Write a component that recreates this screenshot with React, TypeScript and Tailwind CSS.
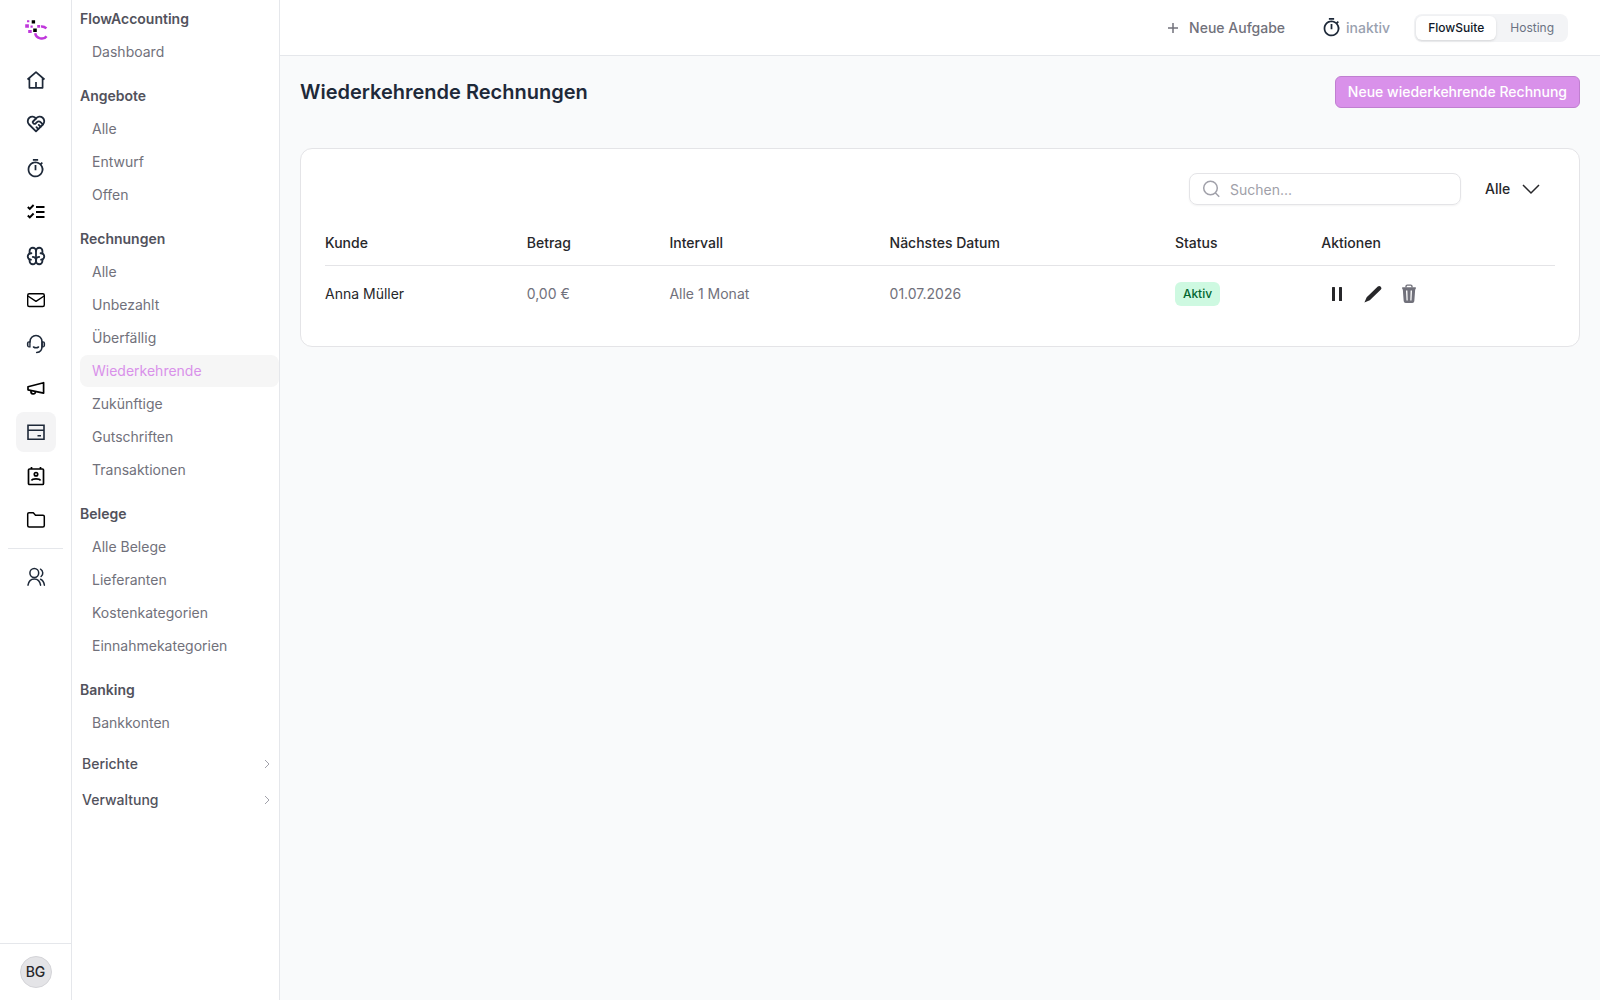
import { ReactNode } from 'react';
import { MdOutlineTimer } from 'react-icons/md';
import { TbBrain, TbHeartHandshake } from 'react-icons/tb';

const HomeIcon = () => (
  <svg viewBox="0 0 20 20" className="size-5" fill="none" stroke="currentColor" strokeWidth="1.7" strokeLinejoin="round">
    <path d="M3.4 8.4v9.400h13.200V8.400M1.500 9.500 10 2.200l8.500 7.300M10 17.500V12" />
  </svg>
);

const ChecksIcon = () => (
  <svg viewBox="0 0 20 20" className="size-5" fill="none" stroke="currentColor" strokeWidth="1.9">
    <path d="m1.800 5 2 2 3.800-4M1.800 13.500l2 2 3.800-4M10 5h8.500M10 10h8.500M10 15h8.500" />
  </svg>
);

const MailIcon = () => (
  <svg viewBox="0 0 20 20" className="size-5" fill="none" stroke="currentColor" strokeWidth="1.400" strokeLinejoin="round">
    <rect x="1.700" y="3.700" width="16.600" height="12.800" rx="1.500" />
    <path d="m1.900 6 8.100 5.300L18.100 6" />
  </svg>
);

const HeadsetIcon = () => (
  <svg viewBox="0 0 20 20" className="size-5" fill="none" stroke="currentColor" strokeWidth="1.600" strokeLinecap="round">
    <path d="M4 8V7.500a6 6 0 0 1 12 0v5c0 3.500-2 5.700-5.300 6M7.500 13c1.600.9 3.500.9 5 0" />
    <path d="M4 7.800H3A1.500 1.500 0 0 0 1.500 9.300v2A1.500 1.500 0 0 0 3 12.800h1zM16 7.800h1a1.500 1.500 0 0 1 1.500 1.500v2a1.500 1.500 0 0 1-1.500 1.500h-1z" fill="currentColor" fillOpacity=".4" strokeWidth="1.200" />
  </svg>
);

const MegaphoneIcon = () => (
  <svg viewBox="0 0 20 20" className="size-5" fill="none" stroke="currentColor" strokeWidth="1.700" strokeLinejoin="round">
    <path d="M2 8.700 17.600 4.700v10.400L2 11.800z" />
    <path d="M5 12.600v.9a2.200 2.200 0 0 0 4.400.5l.1-.5" />
  </svg>
);

const CardIcon = () => (
  <svg viewBox="0 0 20 20" className="size-5" fill="none" stroke="currentColor" strokeWidth="1.600">
    <path d="M2 3.200h16v14H2zM2 8.300h16M11.500 13.700h3.500" />
  </svg>
);

const ContactIcon = () => (
  <svg viewBox="0 0 20 20" className="size-5" fill="none" stroke="currentColor" strokeWidth="1.700">
    <rect x="2.500" y="3" width="15" height="15.500" rx="1" />
    <path d="M5.500 1v2M14.500 1v2M5.500 14.500c1-2.200 8-2.200 9 0" />
    <circle cx="10" cy="8.200" r="1.700" />
  </svg>
);

const FolderIcon = () => (
  <svg viewBox="0 0 20 20" className="size-5" fill="none" stroke="currentColor" strokeWidth="1.500" strokeLinejoin="round">
    <path d="M3 2.800h4.300L9.500 5.200H17a1.300 1.300 0 0 1 1.300 1.300v9a1.500 1.500 0 0 1-1.500 1.500H3.200a1.500 1.500 0 0 1-1.500-1.500V4.100A1.300 1.300 0 0 1 3 2.800z" />
  </svg>
);

const UsersIcon = () => (
  <svg viewBox="0 0 20 20" className="size-5" fill="none" stroke="currentColor" strokeWidth="1.500" strokeLinecap="round">
    <circle cx="8.300" cy="6" r="4.400" />
    <path d="M2 18.200c.6-4 3-6.300 6.300-6.300s5.700 2.300 6.300 6.300M14.500 2.200a4.400 4.400 0 0 1 .6 7.300M14.600 12.300c2 .9 3.400 3 3.800 5.900" />
  </svg>
);

const TrashIcon = () => (
  <svg viewBox="0 0 20 20" className="size-5" fill="currentColor">
    <path d="M7 3.500V2.400A1.300 1.300 0 0 1 8.300 1.100h3.400A1.300 1.300 0 0 1 13 2.400v1.100" fill="none" stroke="currentColor" strokeWidth="1.400" />
    <path
      fillRule="evenodd"
      d="M3.200 3.200h13.600v2h-.6l-.9 12a2 2 0 0 1-2 1.800H6.700a2 2 0 0 1-2-1.800l-.9-12h-.6zM7 6.500l.5 10h1.200l-.3-10zM11.600 6.500l-.3 10h1.200l.5-10z"
    />
  </svg>
);

const Logo = () => (
  <svg viewBox="0 0 24 24" className="size-6" fill="#c038dc">
    <path d="M3 .2h2.300v2H3zM1.200 4.200h3.700v3.600H1.200zM6.500 5.500h2.200v2.200H6.500zM4.200 10h3.500v3.100H4.200zM13.200 5h2.900v2.800h-2.900z" />
    <path d="M7.700.2h3.400v3.300H7.700zM9.200 8.600h3.600v3.500H9.200z" fill="#000" />
    <path d="M17 6.500c2.300-.2 4 .5 5.400 1.800M11.200 13.300c1 5.600 8.600 7 11.300 2.900" fill="none" stroke="#c038dc" strokeWidth="2.500" />
  </svg>
);

const railItems: { label: string; icon: ReactNode; dark?: boolean; active?: boolean }[] = [
  { label: 'Start', icon: <HomeIcon /> },
  { label: 'CRM', icon: <TbHeartHandshake className="size-[22px]" /> },
  { label: 'Zeiterfassung', icon: <MdOutlineTimer className="size-[21px]" /> },
  { label: 'Aufgaben', icon: <ChecksIcon />, dark: true },
  { label: 'KI', icon: <TbBrain className="size-[22px]" /> },
  { label: 'E-Mail', icon: <MailIcon />, dark: true },
  { label: 'Support', icon: <HeadsetIcon /> },
  { label: 'Marketing', icon: <MegaphoneIcon />, dark: true },
  { label: 'Buchhaltung', icon: <CardIcon />, active: true },
  { label: 'Personal', icon: <ContactIcon />, dark: true },
  { label: 'Dateien', icon: <FolderIcon />, dark: true },
];

const groups = [
  { title: 'FlowAccounting', items: ['Dashboard'] },
  { title: 'Angebote', items: ['Alle', 'Entwurf', 'Offen'] },
  {
    title: 'Rechnungen',
    items: ['Alle', 'Unbezahlt', 'Überfällig', 'Wiederkehrende', 'Zukünftige', 'Gutschriften', 'Transaktionen'],
  },
  { title: 'Belege', items: ['Alle Belege', 'Lieferanten', 'Kostenkategorien', 'Einnahmekategorien'] },
  { title: 'Banking', items: ['Bankkonten'] },
];

const invoices = [
  { customer: 'Anna Müller', amount: '0,00 €', interval: 'Alle 1 Monat', next: '01.07.2026', status: 'Aktiv' },
];

const Rail = () => (
  <nav aria-label="Module" className="flex w-[72px] shrink-0 flex-col border-r border-gray-200 bg-white">
    <a href="#" aria-label="FlowSuite" className="mt-5 mb-4 flex justify-center">
      <Logo />
    </a>
    <div className="flex flex-col items-center gap-1">
      {railItems.map((item) => (
        <a
          key={item.label}
          href="#"
          aria-label={item.label}
          className={`flex size-10 items-center justify-center rounded-lg ${item.dark ? 'text-black' : 'text-gray-800'} ${
            item.active ? 'bg-zinc-100' : ''
          }`}
        >
          {item.icon}
        </a>
      ))}
    </div>
    <hr className="mx-2 my-2 border-gray-200" />
    <a href="#" aria-label="Team" className="mx-auto flex size-10 items-center justify-center text-gray-800">
      <UsersIcon />
    </a>
    <div className="mt-auto flex justify-center border-t border-gray-200 py-3">
      <button
        type="button"
        className="size-8 rounded-full border border-zinc-300 bg-zinc-200 text-sm font-medium text-zinc-800"
      >
        BG
      </button>
    </div>
  </nav>
);

const Sidebar = () => (
  <nav aria-label="FlowAccounting" className="w-52 shrink-0 border-r border-gray-200 bg-white pt-[3px] pl-2">
    <div className="flex flex-col gap-3">
      {groups.map((group) => (
        <div key={group.title} className="flex flex-col gap-px">
          <h2 className="text-sm leading-8 font-semibold text-zinc-600">{group.title}</h2>
          {group.items.map((item) => (
            <a
              key={item}
              href="#"
              className={`rounded-lg pl-3 text-sm leading-8 ${
                item === 'Wiederkehrende' ? 'bg-[#f6f6f6] text-[#d991ea]' : 'text-zinc-500'
              }`}
            >
              {item}
            </a>
          ))}
        </div>
      ))}
    </div>
    <div className="mt-[7px]">
      {['Berichte', 'Verwaltung'].map((title) => (
        <button
          key={title}
          type="button"
          className="flex h-9 w-full items-center justify-between pr-2 pl-[2px] text-sm font-medium text-zinc-600"
        >
          {title}
          <svg viewBox="0 0 8 10" className="h-[10px] w-2" fill="none" stroke="#a1a1aa">
            <path d="m2 1 4 4-4 4" />
          </svg>
        </button>
      ))}
    </div>
  </nav>
);

const Header = () => (
  <header className="flex h-14 items-center justify-end border-b border-gray-200 bg-white pr-8">
    <button type="button" className="flex items-center gap-2 text-sm font-medium text-zinc-500">
      <svg viewBox="0 0 16 16" className="size-4" fill="none" stroke="currentColor" strokeWidth="1.500">
        <path d="M8 3v10M3 8h10" />
      </svg>
      Neue Aufgabe
    </button>
    <button type="button" className="ml-9 flex items-center gap-1 text-sm font-medium text-gray-400">
      <MdOutlineTimer className="size-[21px] text-gray-800" />
      inaktiv
    </button>
    <div className="ml-6 flex rounded-lg bg-gray-100 p-[2px] text-xs font-medium">
      <button type="button" className="h-6 rounded-md bg-white px-3 text-gray-900 shadow-sm">
        FlowSuite
      </button>
      <button type="button" className="h-6 pr-3 pl-[14px] font-normal text-gray-500">
        Hosting
      </button>
    </div>
  </header>
);

const InvoiceTable = () => (
  <table className="mt-4 w-full table-fixed text-left text-sm">
    <thead>
      <tr className="h-11 border-b border-zinc-200 text-zinc-800">
        <th className="w-[16.4%] font-medium">Kunde</th>
        <th className="w-[11.6%] font-medium">Betrag</th>
        <th className="w-[17.9%] font-medium">Intervall</th>
        <th className="w-[23.2%] font-medium">Nächstes Datum</th>
        <th className="w-[11.9%] font-medium">Status</th>
        <th className="font-medium">Aktionen</th>
      </tr>
    </thead>
    <tbody>
      {invoices.map((invoice) => (
        <tr key={invoice.customer} className="h-[57px] text-zinc-500">
          <td className="text-zinc-800">{invoice.customer}</td>
          <td>{invoice.amount}</td>
          <td>{invoice.interval}</td>
          <td>{invoice.next}</td>
          <td>
            <span className="inline-block rounded-md bg-[#cef9e1] px-2 text-xs leading-6 font-medium text-green-800">
              {invoice.status}
            </span>
          </td>
          <td>
            <div className="flex gap-1 text-zinc-800">
              <button type="button" aria-label="Pausieren" className="flex size-8 items-center justify-center">
                <svg viewBox="0 0 20 20" className="size-5" fill="currentColor">
                  <rect x="5" y="3" width="3" height="14" rx=".5" />
                  <rect x="12" y="3" width="3" height="14" rx=".5" />
                </svg>
              </button>
              <button type="button" aria-label="Bearbeiten" className="flex size-8 items-center justify-center">
                <svg viewBox="0 0 20 20" className="size-5" fill="currentColor">
                  <path d="M14.800 2.500a2.200 2.200 0 0 1 3.100 3.100L6.800 16.200 1.400 18.500l2.300-5.300z" />
                </svg>
              </button>
              <button type="button" aria-label="Löschen" className="flex size-8 items-center justify-center text-zinc-500">
                <TrashIcon />
              </button>
            </div>
          </td>
        </tr>
      ))}
    </tbody>
  </table>
);

export default function App() {
  return (
    <div className="flex min-h-screen bg-gray-50 font-[Inter,sans-serif] antialiased">
      <Rail />
      <Sidebar />
      <div className="min-w-0 flex-1">
        <Header />
        <main className="p-5">
          <div className="flex items-center justify-between">
            <h1 className="text-xl font-semibold text-gray-800">Wiederkehrende Rechnungen</h1>
            <button
              type="button"
              className="h-8 rounded-md border border-[#c07fd0] bg-[#d991ea] px-3 text-sm font-medium text-white"
            >
              Neue wiederkehrende Rechnung
            </button>
          </div>
          <section className="mt-10 rounded-xl border border-zinc-200 bg-white p-6">
            <div className="flex items-center justify-end">
              <label className="flex h-8 w-[272px] items-center gap-2 rounded-lg border border-zinc-200 px-3 shadow-xs">
                <svg viewBox="0 0 20 20" className="size-5 shrink-0" fill="none" stroke="#a1a1aa" strokeWidth="1.500">
                  <circle cx="8.500" cy="9" r="6.800" />
                  <path d="m13.300 13.800 3.900 3.900" />
                </svg>
                <input
                  type="search"
                  aria-label="Suchen"
                  placeholder="Suchen..."
                  className="min-w-0 flex-1 pt-px text-sm outline-none placeholder:text-zinc-400"
                />
              </label>
              <div className="mr-[14px] ml-6 flex items-center">
                <select aria-label="Status filtern" className="appearance-none text-sm font-medium text-zinc-800">
                  <option>Alle</option>
                </select>
                <svg viewBox="0 0 20 20" className="ml-[10px] size-5" fill="none" stroke="#27272a" strokeWidth="1.500">
                  <path d="m2 6 8 8 8-8" />
                </svg>
              </div>
            </div>
            <InvoiceTable />
          </section>
        </main>
      </div>
    </div>
  );
}
